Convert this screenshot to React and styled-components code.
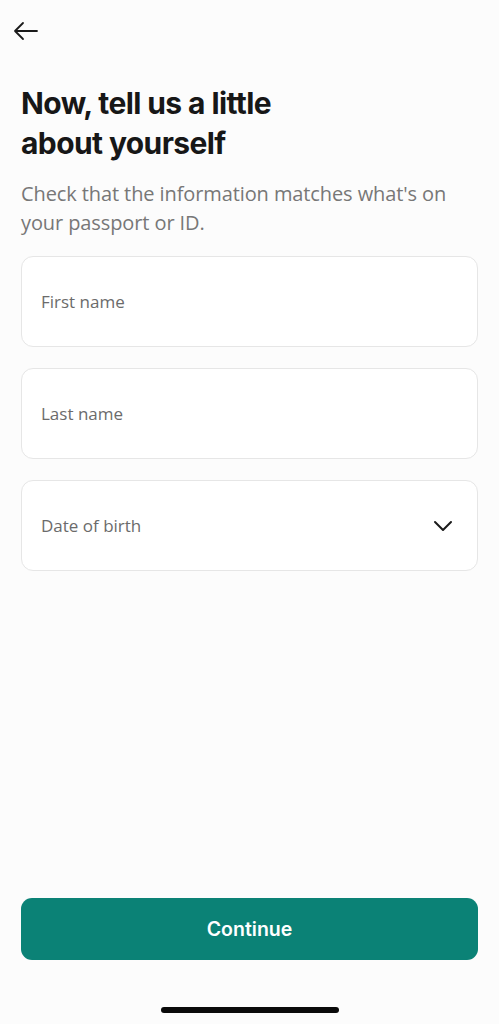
import React from "react";
import styled, { createGlobalStyle } from "styled-components";

const Global = createGlobalStyle`
  html, body { margin: 0; padding: 0; background: #fcfcfc; }
  * { box-sizing: border-box; }
`;

const Screen = styled.div`
  width: 499px;
  height: 1024px;
  background: #fcfcfc;
  display: flex;
  flex-direction: column;
  font-family: Inter, "Liberation Sans", sans-serif;
  color: #1a1a1a;
`;

const TopBar = styled.div`
  height: 62px;
  padding: 19px 0 0 12px;
`;

const BackButton = styled.button`
  border: 0;
  background: none;
  padding: 0;
  width: 28px;
  height: 24px;
  display: flex;
  align-items: center;
  justify-content: center;
`;

const Content = styled.div`
  flex: 1;
  padding: 21px 21px 0 21px;
  display: flex;
  flex-direction: column;
`;

const Title = styled.h1`
  margin: 0;
  font-size: 30px;
  line-height: 40px;
  font-weight: 700;
  letter-spacing: -0.6px;
  color: #171717;
`;

const Subtitle = styled.p`
  margin: 16px 0 0 0;
  font-family: "Open Sans", "Liberation Sans", sans-serif;
  font-size: 20px;
  line-height: 29px;
  color: #777;
  letter-spacing: -0.1px;
`;

const Fields = styled.div`
  margin-top: 19px;
  display: flex;
  flex-direction: column;
  gap: 21px;
`;

const Field = styled.div`
  height: 91px;
  background: #fff;
  border: 1px solid #e6e6e6;
  border-radius: 12px;
  display: flex;
  align-items: center;
  justify-content: space-between;
  padding: 0 24px 0 19px;
`;

const Label = styled.span`
  font-family: "Open Sans", "Liberation Sans", sans-serif;
  font-size: 17px;
  color: #6b6b6b;
`;

const Footer = styled.div`
  padding: 0 21px;
  display: flex;
  flex-direction: column;
  align-items: center;
`;

const ContinueButton = styled.button`
  width: 100%;
  height: 62px;
  border: 0;
  border-radius: 11px;
  background: #0b8276;
  color: #fff;
  font-family: Inter, "Liberation Sans", sans-serif;
  font-size: 19.5px;
  font-weight: 600;
  letter-spacing: 0;
`;

const HomeIndicator = styled.div`
  margin-top: 47px;
  margin-bottom: 11px;
  width: 178px;
  height: 6px;
  border-radius: 3px;
  background: #0a0a0a;
`;

export default function App() {
  return (
    <>
      <Global />
      <Screen>
        <TopBar>
          <BackButton aria-label="Back">
            <svg width="26" height="20" viewBox="0 0 26 20" fill="none" stroke="#1a1a1a" strokeWidth="1.8" strokeLinecap="round" strokeLinejoin="round">
              <path d="M24 10H2M10 2L2 10l8 8" />
            </svg>
          </BackButton>
        </TopBar>
        <Content>
          <Title>
            Now, tell us a little
            <br />
            about yourself
          </Title>
          <Subtitle>Check that the information matches what's on your passport or ID.</Subtitle>
          <Fields>
            <Field>
              <Label>First name</Label>
            </Field>
            <Field>
              <Label>Last name</Label>
            </Field>
            <Field>
              <Label>Date of birth</Label>
              <svg width="20" height="12" viewBox="0 0 20 12" fill="none" stroke="#1a1a1a" strokeWidth="2" strokeLinecap="round" strokeLinejoin="round">
                <path d="M2 2l8 8 8-8" />
              </svg>
            </Field>
          </Fields>
        </Content>
        <Footer>
          <ContinueButton>Continue</ContinueButton>
          <HomeIndicator />
        </Footer>
      </Screen>
    </>
  );
}
